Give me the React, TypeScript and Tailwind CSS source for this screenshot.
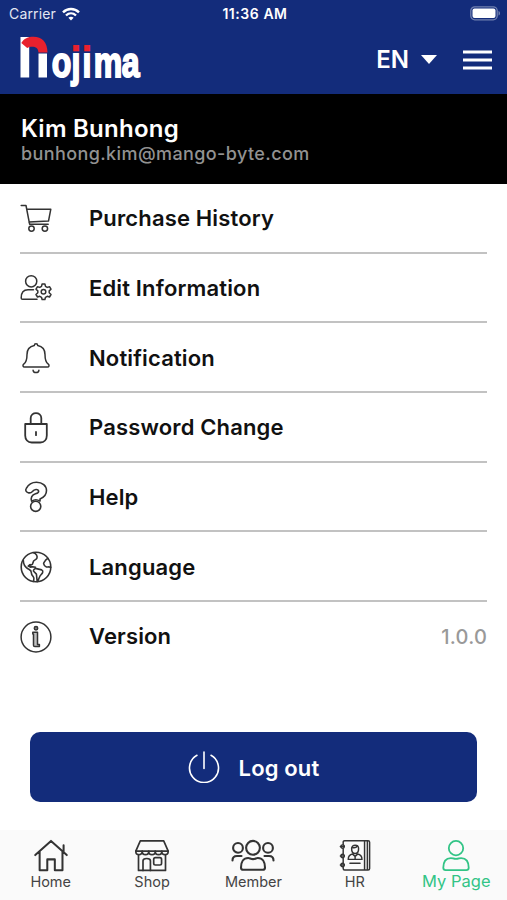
import type { ReactNode } from 'react';

function Icon({ children, className = 'size-8', width = 1.5 }: { children: ReactNode; className?: string; width?: number }) {
  return (
    <svg
      viewBox="0 0 32 32"
      className={className}
      fill="none"
      stroke="currentColor"
      strokeWidth={width}
      strokeLinecap="round"
      strokeLinejoin="round"
    >
      {children}
    </svg>
  );
}

const menu = [
  {
    label: 'Purchase History',
    icon: (
      <Icon width={1.5}>
        <path d="M1.2 2.5H6l3.6 18.6M6.8 6.2h24l-2.3 11.9-19.5 1M9.6 21.3h18.6" />
        <circle cx="11.5" cy="25.6" r="2.7" />
        <circle cx="24.9" cy="25.6" r="2.7" />
      </Icon>
    ),
  },
  {
    label: 'Edit Information',
    icon: (
      <Icon width={1.5}>
        <circle cx="11.2" cy="9.3" r="5.6" />
        <path d="M17 27.2H2.6c-.8 0-1.4-.5-1.4-1.3 0-5 2.6-8.1 6.8-8.1h5.500" />
        <path d="M21.500 14.400 22.100 12h2.800l.6 2.400 1.700 1 2.300-.7 1.500 2.500-1.800 1.700v1.900l1.800 1.700-1.500 2.500-2.300-.7-1.700 1-.6 2.200h-2.800l-.6-2.200-1.700-1-2.300.7-1.500-2.500 1.800-1.700v-1.900L16 17.200l1.500-2.500 2.300.7z" />
        <circle cx="23.500" cy="19.800" r="2.300" />
      </Icon>
    ),
  },
  {
    label: 'Notification',
    icon: (
      <Icon width={1.5}>
        <path d="M14.3 3.400c0-2.200 3.400-2.200 3.400 0 4.800.9 7.300 4.500 7.300 9 0 6.200 1.100 8.200 3.300 9.700 1.300 1 .8 2.900-.9 2.900H4.600c-1.700 0-2.200-1.900-.9-2.900C5.900 20.600 7 18.600 7 12.400c0-4.500 2.500-8.100 7.300-9z" />
        <path d="M13.100 28.300c.4 3 5.400 3 5.800 0" />
      </Icon>
    ),
  },
  {
    label: 'Password Change',
    icon: (
      <Icon width={1.8}>
        <path d="M5.200 12h21.600v11.500c0 4-2.500 7-6.500 7h-8.600c-4 0-6.500-3-6.500-7zM10.700 12V6c0-6.500 10.600-6.500 10.600 0v6M16 20v3.200" />
      </Icon>
    ),
  },
  {
    label: 'Help',
    icon: (
      <Icon width={1.6}>
        <path d="M8.200 11.700c-2.200-.5-3.100-2.500-1.900-4.300C8.300 3.500 12 1.300 16.500 1.300c5.900 0 10 3.500 10 8.300 0 4.500-2.800 7-6.500 8.500v2c-2.300-1.500-5.800-1.700-8.300.2-1.400-3.500.2-6.600 3.800-7.500 2.500-.6 3.400-1.500 3.100-2.800-.6-2.200-4.300-1.900-6.200.4-1.300 1.500-2.600 1.800-4.200 1.300z" />
        <circle cx="15.700" cy="25.300" r="5.100" />
      </Icon>
    ),
  },
  {
    label: 'Language',
    icon: (
      <Icon width={1.600}>
        <circle cx="16" cy="16" r="14.800" />
        <path d="M13.600 1.700c2.800 1 4.100 3.400 3.300 5.500-.5 1.300-2.300 1.700-3.300 2.800l-1.300 3.500-2.700.2 1.600 1.900 4.300.6M10.100 13.500l-1.900 1.600 2.600 1.100M3.300 9.300c0 3.400 1.500 6.500 4.500 8.400 1.500 1 3.700 1.400 3.500 3.800-.1 2 .9 3.100 2 4.300 1.300 1.500.4 2.900.2 4.600" />
        <path d="M13.400 20c.2-1.700 1.500-2.700 3-2.400l5.300 1.300c1.700.5 1.300 3.200-.4 4.500-1.900 1.500-2.100 4-3.600 7.100M13.400 20l3 3.100.8 7.500M27.800 7.300l-2.200 1.900c-.8 1.700-1.900 2-2 3.500.3 1.600 1.400 2.800 2.800 3.300 1.600.1 2.800-.5 4.300.4" />
      </Icon>
    ),
  },
  {
    label: 'Version',
    value: '1.0.0',
    icon: (
      <Icon width={1.500}>
        <circle cx="16" cy="16" r="14.900" />
        <circle cx="16" cy="7.300" r="1.700" fill="currentColor" fillOpacity=".6" />
        <path d="M12.800 11.200h4.700v12.300h1.900v2h-4.600c-.8 0-1.300-.4-1.300-1.300V13h-.7z" fill="currentColor" fillOpacity=".3" />
      </Icon>
    ),
  },
];

const tabs = [
  {
    label: 'Home',
    icon: (
      <Icon className="size-9" width={1.800}>
        <path d="M2 15.200 16 2.600l14 12.600M5.900 12.300v16.300h6.800V19h6.700v9.600h6.800V12.300M27.200 6.500v5.500" />
      </Icon>
    ),
  },
  {
    label: 'Shop',
    icon: (
      <Icon className="size-9" width={1.500}>
        <path d="M5.600 2.500h20.800l4 9.200H1.600zM4 15.500v13.300h24V15.500" />
        <path d="M1.600 11.700c0 4.200 5.700 4.200 5.700 0 0 4.200 5.800 4.200 5.800 0 0 4.200 5.800 4.200 5.800 0 0 4.200 5.800 4.200 5.800 0 0 4.200 5.700 4.200 5.700 0" />
        <path d="M8 28.800v-8.500c0-2.800 6.600-2.800 6.600 0v8.500" />
        <rect x="17.500" y="17.500" width="7" height="6.500" rx="1.500" />
      </Icon>
    ),
  },
  {
    label: 'Member',
    icon: (
      <svg viewBox="0 0 44 36" className="h-9 w-11" fill="none" stroke="currentColor" strokeWidth="2.100" strokeLinecap="round">
        <circle cx="22" cy="9.800" r="6.900" />
        <path d="M10 29.500c0-5.500 2.500-9.500 7.200-9.500 1.600 0 2.600 1.100 4.800 1.100s3.200-1.100 4.800-1.100c4.700 0 7.200 4 7.200 9.500 0 1.500-.7 2.300-2.200 2.300H12.200c-1.500 0-2.200-.8-2.200-2.300z" />
        <circle cx="7" cy="9.900" r="4.900" />
        <circle cx="37" cy="9.900" r="4.900" />
        <path d="M1.500 22.500c0-3 1.500-4.500 4.500-4.500h4.500M42.500 22.500c0-3-1.500-4.500-4.500-4.500h-4.500" />
      </svg>
    ),
  },
  {
    label: 'HR',
    icon: (
      <Icon className="size-9" width={1.300}>
        <path d="M5.500 6V3.700c0-.8.500-1.300 1.300-1.300h20.900c.8 0 1.300.5 1.300 1.300v23.500c0 .8-.5 1.300-1.300 1.300H6.800c-.8 0-1.300-.5-1.300-1.300V25M5.500 9.500v5M5.500 18v5M24.500 2.400v26.100M27 2.400v26.100M11.500 22.500h9" />
        <circle cx="5" cy="7.600" r="1.500" />
        <circle cx="5" cy="16" r="1.500" />
        <circle cx="5" cy="24" r="1.500" />
        <path d="M3 7.600h3.500M3 16h3.500M3 24h3.500M10 19c0-3 1.600-4.300 3.900-4.700l2.200 2 2.200-2c2.300.4 3.900 1.700 3.900 4.700zM16.100 16.500v2" />
        <path d="M13 9.500c0-4.200 6.200-4.200 6.200 0 0 2.300-1 4.300-3.100 4.300s-3.100-2-3.100-4.300z" />
        <path d="M13.500 8.500c2.500.7 4-.5 4.500-1.500" />
      </Icon>
    ),
  },
  {
    label: 'My Page',
    active: true,
    icon: (
      <Icon className="size-9" width={1.600}>
        <circle cx="16" cy="9" r="6.400" />
        <path d="M4.700 26.500c0-5.200 2.300-8.700 6.700-8.700 1.700 0 2.400.8 4.600.8s2.900-.8 4.600-.8c4.400 0 6.700 3.500 6.700 8.700 0 1.400-.7 2.100-2.100 2.100H6.800c-1.400 0-2.100-.7-2.100-2.100z" />
      </Icon>
    ),
  },
];

function Logo() {
  return (
    <svg viewBox="0 0 122 50" className="h-[50px] w-[122px] overflow-visible">
      <defs>
        {/* dots of j and i are red, the rest of the word is white */}
        <linearGradient id="dots" gradientUnits="userSpaceOnUse" x1="0" y1="0" x2="0" y2="43">
          <stop offset=".39" stopColor="#e8212e" />
          <stop offset=".39" stopColor="#fff" />
        </linearGradient>
      </defs>
      <path d="M.5 1h8.700v40.500H.5zM18.500 17.500h8.500v24h-8.500z" fill="#fff" />
      <path d="M1.300 7C4 2.500 8 .8 13.500.8c8.500 0 14 5.700 14 15.700h-9c-.4-4.200-2.500-5.700-6.500-5.700-2 0-3.200.5-4.800 1.200z" fill="#e8212e" />
      <g transform="scale(.745 1)">
        <text
          x="42.500 69.300 84 99 136.500"
          y="41"
          fontSize="43"
          fontWeight="bold"
          fill="url(#dots)"
          stroke="url(#dots)"
          strokeWidth="2"
          className="font-['Liberation_Sans',sans-serif]"
        >
          ojima
        </text>
      </g>
    </svg>
  );
}

export default function App() {
  return (
    <div className="flex h-[900px] w-[507px] flex-col overflow-hidden bg-white font-['Inter',sans-serif] text-[#111]">
      <header className="h-[94px] shrink-0 bg-[#132c7b] text-white">
        <div className="grid h-[27px] grid-cols-3 items-center pr-[6px] pl-[9px]">
          <div className="flex items-center gap-[6px] text-[14px] tracking-[0.150px] text-[#e3e6f2]">
            Carrier
            <svg viewBox="0 0 18 14" className="h-[14px] w-[18px]" fill="none" stroke="#fff" strokeWidth="2.400">
              <path d="M1 5.300c4.500-4.500 11.500-4.500 16 0M4 8.500c2.900-2.800 7.100-2.800 10 0" />
              <path d="M6.400 10.700c1.500-1.400 3.700-1.400 5.200 0L9 13.400z" fill="#fff" stroke="none" />
            </svg>
          </div>
          <span className="text-center text-[14px] font-semibold tracking-[0.550px] whitespace-nowrap">11:36 AM</span>
          <svg viewBox="0 0 31 15" className="h-[15px] w-[31px] justify-self-end">
            <rect x=".8" y=".8" width="26.400" height="13" rx="4" fill="none" stroke="#7180b0" strokeWidth="1.300" />
            <rect x="2.500" y="2.500" width="23" height="9.600" rx="2" fill="#fff" />
            <path d="M28.500 5c2 .6 2 4 0 4.600z" fill="#7180b0" />
          </svg>
        </div>
        <div className="flex h-[67px] items-center pr-[15px] pl-5">
          <Logo />
          <span className="mt-[-2px] ml-auto text-[24px] font-semibold">EN</span>
          <svg viewBox="0 0 16 9" className="mt-[-2px] ml-[12px] h-[9px] w-4" fill="#fff">
            <path d="M0 0h16L8 9z" />
          </svg>
          <svg viewBox="0 0 29 20" className="mt-[-2px] ml-[26px] h-5 w-[29px]" stroke="#fff" strokeWidth="3">
            <path d="M0 2h29M0 10h29M0 18h29" />
          </svg>
        </div>
      </header>

      <section className="h-[90px] shrink-0 bg-black pt-[20px] pl-[21px]">
        <h1 className="text-[24px] leading-[30px] font-semibold tracking-[0.250px] text-white">Kim Bunhong</h1>
        <p className="text-[18px] leading-[20px] font-medium tracking-[0.400px] text-[#929292]">bunhong.kim@mango-byte.com</p>
      </section>

      <ul className="mx-5 shrink-0">
        {menu.map((item) => (
          <li key={item.label} className="flex h-[69.650px] items-center border-b-2 border-[#c2c2c2] pt-[2px] last:border-b-0 last:pt-0">
            <div className="w-[69px] text-[#333]">{item.icon}</div>
            <span className="text-[22px] font-semibold tracking-[0.150px]">{item.label}</span>
            {item.value && <span className="ml-auto text-[20px] font-medium tracking-[0.200px] text-[#999]">{item.value}</span>}
          </li>
        ))}
      </ul>

      <button className="mx-[30px] mt-[61px] flex h-[70px] shrink-0 items-center justify-center rounded-[10px] bg-[#132c7b] pt-[2px] text-white">
        <Icon width={1.600} className="mt-[-2px] mr-[19px] size-8">
          <path d="M9 4.300a14.500 14.500 0 1 0 14 0M16 1v16.500" />
        </Icon>
        <span className="text-[22px] font-semibold tracking-[0.150px]">Log out</span>
      </button>

      <nav className="mt-auto grid h-[70px] shrink-0 grid-cols-5 bg-[#fafafa]">
        {tabs.map((tab) => (
          <div
            key={tab.label}
            className={tab.active ? 'flex flex-col items-center pt-2 text-[#32c486]' : 'flex flex-col items-center pt-2 text-[#333]'}
          >
            {tab.icon}
            <span className={tab.active ? 'mt-[-1px] text-[16.500px] leading-[16px]' : 'text-[14.500px] leading-[16px] text-[#444]'}>
              {tab.label}
            </span>
          </div>
        ))}
      </nav>
    </div>
  );
}
